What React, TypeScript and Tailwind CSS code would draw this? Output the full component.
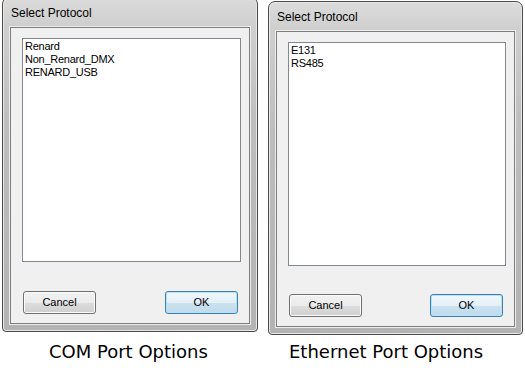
import React from "react";

const ui = { fontFamily: '"Liberation Sans", Arial, sans-serif' };
const label = { fontFamily: '"DejaVu Sans", Verdana, sans-serif' };

function Button({ text, primary }: { text: string; primary?: boolean }) {
  return (
    <div
      className={`w-[73px] h-[23px] rounded-[3px] border flex items-center justify-center text-[11px] text-black ${
        primary
          ? "border-[#3c7fb1] shadow-[inset_0_0_0_1px_#b7e2f7] bg-[linear-gradient(#f1f8fc_0%,#e4eff7_50%,#cbe1ef_51%,#c0dbec_100%)]"
          : "border-[#707070] shadow-[inset_0_0_0_1px_#fcfcfc] bg-[linear-gradient(#f2f2f2_0%,#ebebeb_50%,#dddddd_51%,#cfcfcf_100%)]"
      }`}
      style={ui}
    >
      {text}
    </div>
  );
}

function Dialog({ items, w, h }: { items: string[]; w: number; h: number }) {
  return (
    <div
      className="rounded-t-[7px] rounded-b-[4px] border border-[#4a4a4a] bg-[linear-gradient(#dcdcdc_0%,#cfcfcf_8%,#bdbdbd_40%,#b3b3b3_100%)] shadow-[inset_0_0_0_1px_#e8e8e8] flex flex-col px-[7px] pb-[7px]"
      style={{ width: w, height: h }}
    >
      <div className="h-[29px] flex items-center pl-[1px] text-[12px] text-black" style={ui}>
        Select Protocol
      </div>
      <div className="flex-1 border border-[#7e7e7e] bg-[#f0f0f0] shadow-[0_0_0_1px_#ececec] flex flex-col pl-[11px] pr-[8px] pt-[10px] pb-[9px]">
        <div className="h-[224px] bg-white border border-[#828790] px-[2px] pt-[1px]">
          {items.map((t) => (
            <div key={t} className="text-[11px] leading-[13px] tracking-[-0.25px] text-black" style={ui}>
              {t}
            </div>
          ))}
        </div>
        <div className="flex-1" />
        <div className="flex justify-between pl-[1px] pr-[3px]">
          <Button text="Cancel" />
          <Button text="OK" primary />
        </div>
      </div>
    </div>
  );
}

export default function App() {
  return (
    <div className="w-[525px] h-[372px] bg-white overflow-hidden flex">
      <div className="ml-[2px] mt-[-3px] flex flex-col">
        <Dialog items={["Renard", "Non_Renard_DMX", "RENARD_USB"]} w={256} h={335} />
        <div className="ml-[47px] mt-[6px] text-[18px] text-black whitespace-nowrap" style={label}>
          COM Port Options
        </div>
      </div>
      <div className="ml-[10px] mt-[1px] flex flex-col">
        <Dialog items={["E131", "RS485"]} w={255} h={334} />
        <div className="ml-[21px] mt-[3px] text-[18px] text-black whitespace-nowrap" style={label}>
          Ethernet Port Options
        </div>
      </div>
    </div>
  );
}
